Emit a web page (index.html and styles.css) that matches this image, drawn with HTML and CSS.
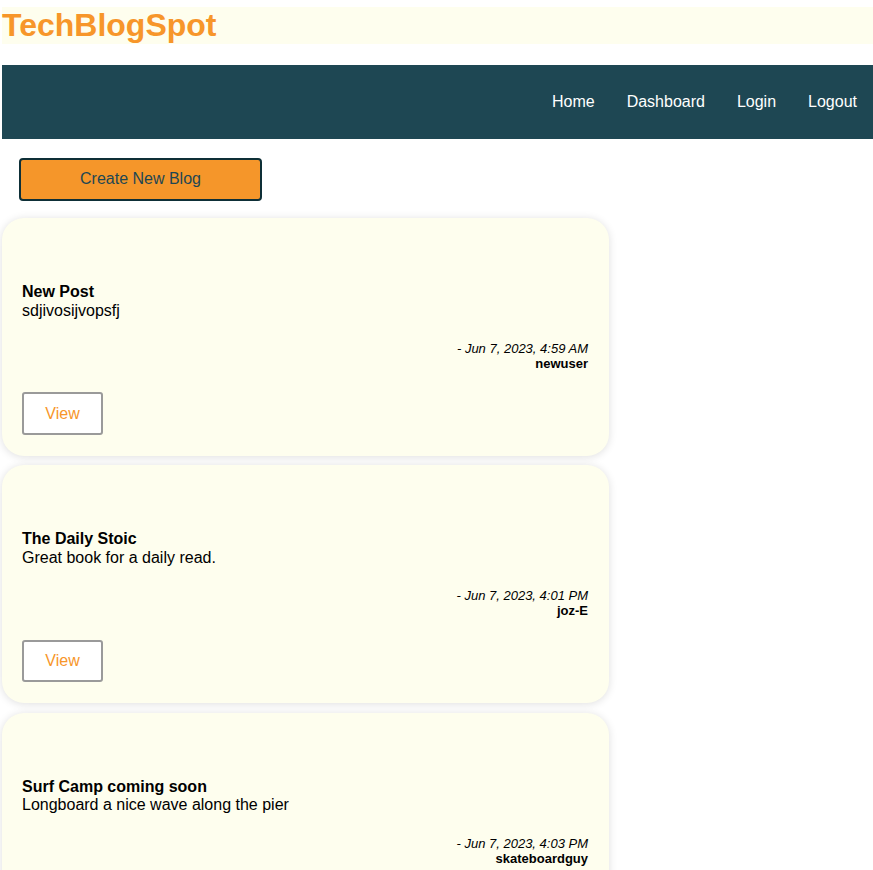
FILE: index.html
```html
<!DOCTYPE html>
<html lang="en">
<head>
<meta charset="utf-8">
<title>TechBlogSpot</title>
<link rel="stylesheet" href="styles.css">
</head>
<body>
<div class="page">
  <header class="site-header">
    <h1 class="site-title">TechBlogSpot</h1>
  </header>
  <nav class="site-nav">
    <a href="#">Home</a>
    <a href="#">Dashboard</a>
    <a href="#">Login</a>
    <a href="#">Logout</a>
  </nav>
  <main class="content">
    <div class="actions">
      <button class="create-btn">Create New Blog</button>
    </div>
    <section class="posts">
      <article class="card">
        <h2 class="card-title">New Post</h2>
        <p class="card-body">sdjivosijvopsfj</p>
        <div class="meta">
          <div class="date">- Jun 7, 2023, 4:59 AM</div>
          <div class="author">newuser</div>
        </div>
        <button class="view-btn">View</button>
      </article>
      <article class="card">
        <h2 class="card-title">The Daily Stoic</h2>
        <p class="card-body">Great book for a daily read.</p>
        <div class="meta">
          <div class="date">- Jun 7, 2023, 4:01 PM</div>
          <div class="author">joz-E</div>
        </div>
        <button class="view-btn">View</button>
      </article>
      <article class="card">
        <h2 class="card-title">Surf Camp coming soon</h2>
        <p class="card-body">Longboard a nice wave along the pier</p>
        <div class="meta">
          <div class="date">- Jun 7, 2023, 4:03 PM</div>
          <div class="author">skateboardguy</div>
        </div>
        <button class="view-btn">View</button>
      </article>
    </section>
  </main>
</div>
</body>
</html>
```

FILE: styles.css
```css
* {
  box-sizing: border-box;
}

html, body {
  margin: 0;
  padding: 0;
  background: #ffffff;
  font-family: "Liberation Sans", Arial, sans-serif;
  font-size: 16px;
  color: #000;
}

.page {
  margin-left: 2px;
  padding-top: 7px;
}

.site-header {
  background: #fefeee;
  margin-bottom: 21.5px;
}

.site-title {
  margin: 0;
  font-size: 32px;
  font-weight: bold;
  line-height: 36.6px;
  color: #f7962a;
}

.site-nav {
  background: #1e4753;
  height: 73.5px;
  display: flex;
  justify-content: flex-end;
  align-items: center;
  gap: 32px;
  padding-right: 16px;
}

.site-nav a {
  color: #ffffff;
  text-decoration: none;
  font-size: 16px;
}

.content {
  padding-top: 19px;
}

.actions {
  padding-left: 17px;
  margin-bottom: 17px;
}

.create-btn {
  display: block;
  width: 243px;
  height: 43.5px;
  background: #f5962a;
  border: 2.5px solid #0e2f37;
  border-radius: 4px;
  color: #1e4753;
  font-family: "Liberation Sans", Arial, sans-serif;
  font-size: 16px;
  padding: 0;
}

.posts {
  display: flex;
  flex-direction: column;
  gap: 9.5px;
}

.card {
  width: 607px;
  background: #fefeee;
  border-radius: 22px;
  box-shadow: 0 1px 8px rgba(0, 0, 0, 0.13);
  padding: 65px 21px 21px 20px;
}

.card-title {
  margin: 0;
  font-size: 16px;
  font-weight: bold;
  line-height: 18.4px;
}

.card-body {
  margin: 0;
  font-size: 16px;
  line-height: 18.4px;
}

.meta {
  margin-top: 21px;
  text-align: right;
  font-size: 13px;
  line-height: 15px;
}

.date {
  font-style: italic;
}

.author {
  font-weight: bold;
}

.view-btn {
  display: block;
  margin-top: 21.5px;
  width: 81px;
  height: 42.5px;
  background: #ffffff;
  border: 2px solid #9a9a9a;
  border-radius: 3px;
  color: #f7962a;
  font-family: "Liberation Sans", Arial, sans-serif;
  font-size: 16px;
  padding: 0;
}
```
